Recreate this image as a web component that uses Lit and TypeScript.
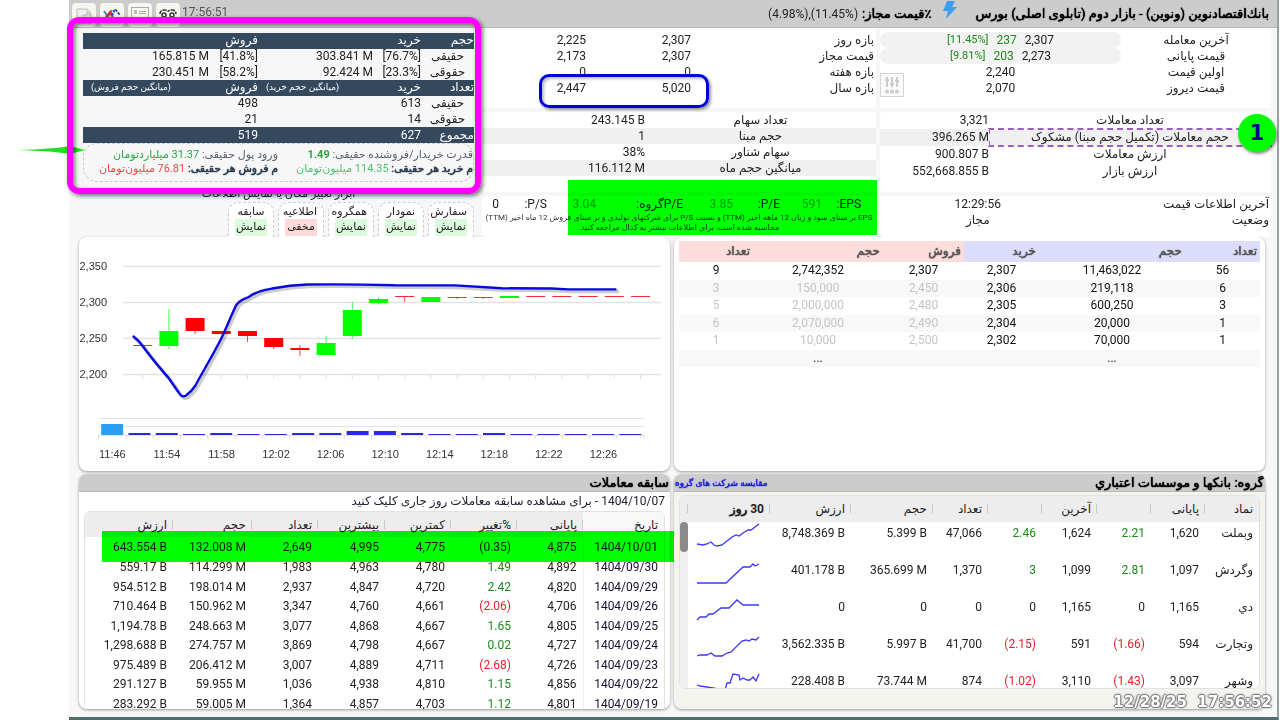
import { LitElement, html, svg, css } from "lit";
import { customElement } from "lit/decorators.js";

type Candle = [number, number, boolean, number?, number?];

// top, bottom, rising, wick top, wick bottom
const CANDLES: Candle[] = [
  [345, 346, false],
  [331, 346, true, 309, 349],
  [318, 331, false, 318, 334],
  [331, 334, false],
  [331, 336, false, 331, 342],
  [338, 347, false, 338, 349],
  [348, 350, false, 345, 356],
  [343, 355, true, 336, 355],
  [310, 336, true, 302, 339],
  [299, 303, true, 297, 304],
  [296, 297, false, 296, 302],
  [297, 302, true],
  [297, 298, false, 297, 299],
  [297, 298, false, 297, 299],
  [296, 298, true],
  [296, 297, false],
  [296, 297, false],
  [296, 297, false],
  [296, 297, false],
  [296, 297, false],
];
const VOLUMES = [11, 2, 2, 1, 2, 1, 1, 2, 2, 4, 4, 2, 1, 1, 2, 1, 1, 1, 1, 1];
const TIMES = ["11:46", "11:54", "11:58", "12:02", "12:06", "12:10", "12:14", "12:18", "12:22", "12:26"];
const PRICES: [string, number][] = [["2,350", 266], ["2,300", 302], ["2,250", 338], ["2,200", 374]];

const BOOK = [
  ["56", "11,463,022", "2,307", "2,307", "2,742,352", "9"],
  ["6", "219,118", "2,306", "2,450", "150,000", "3"],
  ["3", "600,250", "2,305", "2,480", "2,000,000", "5"],
  ["1", "20,000", "2,304", "2,490", "2,070,000", "6"],
  ["1", "70,000", "2,302", "2,500", "10,000", "1"],
];

const HISTORY = [
  ["1404/10/01", "4,875", "(0.35)", "4,775", "4,995", "2,649", "132.008 M", "643.554 B"],
  ["1404/09/30", "4,892", "1.49", "4,780", "4,963", "1,983", "114.299 M", "559.17 B"],
  ["1404/09/29", "4,820", "2.42", "4,720", "4,847", "2,937", "198.014 M", "954.512 B"],
  ["1404/09/26", "4,706", "(2.06)", "4,661", "4,760", "3,347", "150.962 M", "710.464 B"],
  ["1404/09/25", "4,805", "1.65", "4,667", "4,868", "3,077", "248.663 M", "1,194.78 B"],
  ["1404/09/24", "4,727", "0.02", "4,667", "4,798", "3,869", "274.757 M", "1,298.688 B"],
  ["1404/09/23", "4,726", "(2.68)", "4,711", "4,889", "3,007", "206.412 M", "975.489 B"],
  ["1404/09/22", "4,856", "1.15", "4,810", "4,938", "1,036", "59.955 M", "291.127 B"],
  ["1404/09/19", "4,801", "1.12", "4,703", "4,857", "1,364", "59.005 M", "283.292 B"],
];

const GROUP = [
  { row: ["وبملت", "1,620", "2.21", "1,624", "2.46", "47,066", "5.399 B", "8,748.369 B"],
    line: "1,22 7,23 11,22 15,20 18,23 21,24 26,23 31,19 36,15 40,13 43,14 47,11 52,8 55,8 59,5 63,2" },
  { row: ["وگردش", "1,097", "2.81", "1,099", "3", "1,370", "365.699 M", "401.178 B"],
    line: "1,24 30,24 47,8 54,8 57,5 59,7 63,5" },
  { row: ["دي", "1,165", "0", "1,165", "0", "0", "0", "0"],
    line: "1,24 4,21 10,21 13,18 17,18 25,12 33,12 41,4 47,9 63,9" },
  { row: ["وتجارت", "594", "(1.66)", "591", "(2.15)", "41,700", "5.997 B", "3,562.335 B"],
    line: "1,23 4,22 11,22 15,20 19,23 26,23 31,20 35,19 46,8 50,7 53,8 56,6 60,7 63,4" },
  { row: ["وشهر", "3,097", "(1.43)", "3,110", "(1.02)", "874", "73.744 M", "228.408 B"],
    line: "1,15 4,16 17,18 29,20 31,13 34,13 37,4 43,5 44,10 47,8 51,10 54,10 57,7 60,11 63,4" },
];

const TOOLS: [string, boolean][] = [["سفارش", true], ["نمودار", true], ["همگروه", true], ["اطلاعیه", false], ["سابقه", true]];

const tone = (v: string) => (v.startsWith("(") ? "n neg" : v === "0" ? "n" : "n pos");

@customElement("app-root")
export class AppRoot extends LitElement {
  static styles = css`
    :host {
      display: block; height: 100vh; min-height: 600px; overflow: hidden; background: #fff; color: #222;
      font: 12px/16px Roboto, "DejaVu Sans", sans-serif; position: relative; box-sizing: border-box;
    }
    * { box-sizing: border-box; }
    button { font: inherit; color: inherit; margin: 0; cursor: pointer; }
    table { border-collapse: collapse; border-spacing: 0; table-layout: fixed; width: 100%; }
    th, td { padding: 0; font-weight: 400; text-align: right; white-space: nowrap; }
    .n { direction: ltr; unicode-bidi: isolate; }
    .pos { color: #1a8a1a; }
    .neg { color: #e8202a; }
    .strong { font-weight: 400; text-shadow: 0 0 1px currentColor, 0 0 1px currentColor; }
    .frame {
      direction: rtl; height: 100%; margin: 0 1px 0 69px; display: flex; flex-direction: column;
      background: #f7f7f7; border-right: 2px solid #98a0a3; border-bottom: 3px solid #4f6c6e;
    }
    .bar {
      display: flex; align-items: center; height: 28px; flex: none; padding: 0 8px 0 3px;
      background: #ccc; border-bottom: 1px solid #bbb; font-size: 13px;
    }
    .bar h1 { margin: 0; font-size: 13px; color: #000; }
    .bar .bolt { margin: 0 18px 8px 12px; width: 14px; height: 18px; }
    .bar .lim { color: #000; }
    .bar .pcts { margin-right: 4px; font-size: 12px; }
    .clock { margin: 0 auto 4px 0; color: #555; font-size: 12px; padding-left: 2px; }
    .icons { display: flex; gap: 4px; direction: ltr; align-self: flex-end; }
    .icons button {
      width: 24px; height: 24px; padding: 0; border: 0; border-radius: 4px; background: #f6f5ee; display: block;
    }
    .icons svg { display: block; }
    .top { display: grid; grid-template-columns: 391fr 394fr 395fr; gap: 4px; padding: 1px 6px 0 14px; height: 209px; flex: none; }
    .col { display: flex; flex-direction: column; gap: 4px; position: relative; min-width: 0; }
    .card { background: #fff; border-radius: 4px; }
    .c1 { min-height: 79px; padding-top: 3px; position: relative; }
    .c2 { min-height: 80px; }
    .c3 { flex: 1; }
    .kv { display: grid; align-content: start; }
    .kv.quote { grid-template-columns: 150px 1fr; text-align: center; }
    .pill { display: flex; justify-content: center; gap: 8px; border-radius: 8px; }
    .pill .n { font-size: 11px; }
    .pill.on { background: #f2f2f2; }
    .slider {
      position: absolute; left: 0; top: 44px; width: 24px; height: 24px; padding: 0;
      border: 1px solid #d4d4d4; background: #fafafa;
    }
    .slider svg { display: block; margin: auto; }
    .kv.deal { grid-template-columns: 282px 1fr; line-height: 17px; text-align: center; }
    .kv.deal .n { text-align: right; }
    .suspect { outline: 2px dashed #9b5fc0; outline-offset: -1px; }
    .alt { background: #f0f0f0; }
    .kv.half { grid-template-columns: 1fr 1fr; }
    .kv.half > :nth-child(odd) { padding-right: 2px; }
    .kv.half > :nth-child(even) { text-align: center; }
    .kv.range { grid-template-columns: 185px 105px 1fr; }
    .kv.range > :nth-child(3n + 1) { padding-right: 2px; }
    .kv.range .n { text-align: right; }
    .kv.share { grid-template-columns: 231px 1fr; text-align: center; }
    .kv.share .n { text-align: right; }
    .eps { display: grid; grid-template-columns: 39px 42px 47px 50px 87px 49px 48px 1fr; padding-right: 15px; }
    .eps .pos { color: #4a9a4a; }
    .fine { margin: 1px 0 0; color: #333; font-size: 8px; line-height: 10px; text-align: center; }
    .left { padding: 4px 4px 0 0; gap: 0; }
    .clients { height: 110px; line-height: 15px; }
    .clients .head { background: #34495e; color: #fff; }
    .clients .n { text-align: right; }
    .clients .who { text-align: center; }
    .clients .avg { text-align: left; font-size: 9px; padding-left: 8px; }
    .power {
      display: grid; grid-template-columns: 195px 1fr; line-height: 14px; border: 1px dashed #ccc;
      border-radius: 14px; padding: 4px 0 6px; color: #555f6e; height: 39px; font-size: 11px; white-space: nowrap;
    }
    .power b { color: #2c3e50; }
    .power .gain, .power .gain b { color: #28a745; }
    .power .up { color: #4cc274; }
    .power .loss { color: #f04848; }
    .caption { text-align: center; font-size: 11px; line-height: 14px; margin: 5px 0 0; }
    .tools { display: flex; gap: 4px; padding-top: 0; margin-top: auto; }
    .tools button {
      width: 46px; height: 35px; padding: 1px 6px 0; background: #fff; border: 1px dashed #ccc; border-bottom: 0;
      border-radius: 10px 10px 0 0; line-height: 14px; font-size: 11px; display: block; white-space: nowrap;
    }
    .tools span { display: block; }
    .tools .state { background: #dcfbdc; height: 17px; line-height: 15px; }
    .tools .off { background: #fdd9d9; }
    .grid { display: grid; grid-template-columns: 1fr 1fr; gap: 4px; padding: 0 12px 0 10px; }
    .mid { height: 234px; flex: none; }
    .low { flex: 1; min-height: 0; padding-top: 3px; padding-bottom: 8px; }
    .wrap { position: relative; min-width: 0; min-height: 0; }
    .panel { background: #fff; border-radius: 8px; box-shadow: 0 1px 3px #999; overflow: hidden; height: 100%; }
    .chart { display: block; width: 100%; height: 100%; direction: ltr; }
    .chart text { font: 11px "Liberation Sans", sans-serif; fill: #333; }
    .book { margin: 4px 5px; width: calc(100% - 10px); height: 126px; line-height: 17px; color: #111; }
    .book th { height: 21px; padding-right: 3px; color: #555; }
    .book td { text-align: center; }
    .book .buy { background: #dcdcfc; }
    .book .sell { background: #fddcdc; }
    .book tbody tr:nth-child(even) { background: #f8f8f8; }
    .book .dim { color: #c4c4c4; }
    .ttl {
      height: 18px; background: #ccc; display: flex; justify-content: space-between; align-items: center;
      color: #000; padding: 0 1px; border-bottom: 1px solid #bbb;
    }
    .ttl h2 { margin: 0; font-size: 13px; }
    .ttl a { color: #2020e0; font-size: 9px; text-decoration: none; }
    .note { margin: 0; padding: 1px 5px 0 0; line-height: 17px; color: #223; height: 19px; white-space: nowrap; }
    .box { margin: 0 5px; border: 1px solid #e2e2e2; border-radius: 6px; overflow: hidden; background: #fff; }
    .hist th, .group th { height: 26px; background: #ededed; position: relative; padding-right: 6px; }
    .hist th { height: 25px; }
    .hist th + th::before, .group th + th::before {
      content: ""; position: absolute; right: 0; top: 8px; height: 9px; border-right: 1px solid #c8c8c8;
    }
    .hist td, .group td { padding-right: 6px; }
    .hist td.n, .group td.n { padding-right: 6px; text-align: right; }
    .hist th:first-child { background: #f8f8f8; }
    .hist td:first-child { border-left: 1px solid #eee; color: #113; }
    .hist tr { height: 19px; }
    .hist tbody tr:nth-child(even) { height: 20px; }
    .hist tbody tr:first-child { height: 20px; }
    .gpanel { background: #f4f4ef; display: flex; flex-direction: column; }
    .gbox { margin: 3px 5px 20px; flex: 1; min-height: 0; position: relative; }
    .group td { height: 37px; vertical-align: top; line-height: 22px; }
    .group svg { display: block; margin-right: 4px; }
    .track { position: absolute; left: 0; top: 26px; bottom: 0; width: 8px; background: #f0f0f0; }
    .thumb { height: 30px; border-radius: 4px; background: #8a8a8a; }
    .hl { position: absolute; background: #0f0; mix-blend-mode: multiply; pointer-events: none; }
    .hl.ratio { left: 86px; right: -1px; top: 151px; height: 55px; }
    .hl.day { left: 23px; right: -4px; top: 57px; height: 31px; }
    .mark-clients {
      position: absolute; left: -16px; right: -3px; top: -12px; height: 177px; pointer-events: none;
      border: 6px solid #f0f; border-radius: 12px; box-shadow: 2px 2px 4px #0008, inset 2px 2px 4px #0008;
    }
    .mark-year {
      position: absolute; left: 57px; right: 167px; top: 45px; height: 34px; pointer-events: none;
      border: 3px solid #0000dc; border-radius: 10px; box-shadow: 2px 2px 3px #0006, inset 2px 2px 3px #0004;
    }
    .dot {
      position: absolute; right: -5px; top: 85px; width: 38px; height: 38px; border-radius: 50%;
      background: #0f0; color: #000090; font: 700 21px/38px "DejaVu Sans", sans-serif; text-align: center;
      box-shadow: 1px 2px 3px #0007;
    }
    .arrow { position: absolute; left: -66px; top: 115px; width: 68px; height: 12px; }
    .stamp {
      position: absolute; right: 8px; bottom: 8px; font: 700 15px/20px "DejaVu Sans", sans-serif; color: #fff; white-space: pre;
      text-shadow: 1px 0 1px #777, -1px 0 1px #777, 0 1px 1px #777, 0 -1px 1px #777, 0 0 3px #888;
    }
  `;

  private chart() {
    return html`<svg class="chart" viewBox="79 237 591 234" role="img" aria-label="نمودار">
      ${PRICES.map(([t, y]) => svg`
        <path d="M123 ${y + 0.5}H661" stroke="#e2e2e2" stroke-width="1.4" />
        <text x="107" y=${y + 4} text-anchor="end">${t}</text>`)}
      ${CANDLES.map(([a, b, up, w1, w2], i) => {
        const x = 142.7 + i * 26.2;
        const c = up ? "#00ff00" : "#ff0000";
        const thin = b - a === 1;
        return svg`
          <path d="M${x} 375V379" stroke="#ddd" />
          ${w1 ? svg`<path d="M${x} ${w1}V${w2}" stroke=${c} opacity=".75" />` : ""}
          <rect x=${x - 9.5} y=${a} width="19" height=${b - a} fill=${thin ? "#e83030" : c} />`;
      })}
      <path d="M99 418.5H644M99 426.5H644M99 435.5H644" stroke="#e4e4e4" />
      ${VOLUMES.map((h, i) => svg`
        <path d="M${98.8 + i * 27.27} 435V439" stroke="#ddd" />
        <rect x=${101.2 + i * 27.27} y=${435 - h} width="22" height=${h} fill=${i ? "#2c28e0" : "#2a9df4"} />`)}
      <path d="M644 435V439" stroke="#ddd" />
      ${TIMES.map((t, i) => svg`<text x=${112.4 + i * 54.56} y="458" text-anchor="middle">${t}</text>`)}
      <g fill="none" stroke-linecap="round" stroke-linejoin="round">
        ${[["#0003", 2, 3.5], ["#0a08e0", 0, 2.4]].map(([c, o, w]) => svg`
          <path transform="translate(${o} ${o})" stroke=${c} stroke-width=${w}
            d="M133.5 336.5Q138 340 142.7 346C152 359 160 368 168.8 378.3L179 393Q182 398 186 395.5Q191 392 195.3 385.7C206 366 214 353 221 339C228 324 231 316 236 305.5C240 299 245 299 249 296.7C258 291 264 290 272.3 288.5Q290 285 307.3 284.5Q350 284 395 285.2L455 285.4Q480 287 502 288.3L552 288.5L568 289.4H615.5" />`)}
      </g>
    </svg>`;
  }

  private header() {
    return html`<header class="bar">
      <h1 class="strong">بانك‌اقتصادنوین (ونوین) - بازار دوم (تابلوی اصلی) بورس</h1>
      <svg class="bolt" viewBox="0 0 14 18"><path d="M4 0H12L9 6H14L3 18L5 10H0Z" fill="#3d9df2" /></svg>
      <span class="lim strong">٪قیمت مجاز:</span>
      <span class="n pcts">(4.98%),(11.45%)</span>
      <span class="clock">17:56:51</span>
      <div class="icons">
        <button aria-label="یادداشت"><svg width="24" height="24" viewBox="0 0 24 24" fill="none" stroke="#bbb"><path d="M5 6H15L19 10V20H5Z" fill="#eee" /><path d="M15 6V10H19" /><path d="M11 12H15V9L20 14L15 18V16H11Z" fill="#ddd" /></svg></button>
        <button aria-label="نمودار"><svg width="24" height="24" viewBox="0 0 24 24" fill="none" stroke-width="2"><path d="M4 8L8 14L12 7" stroke="#3a8fc0" /><path d="M6 14L10 9L13 15" stroke="#d22" /><path d="M12 13L15 6L20 12" stroke="#35b" stroke-dasharray="3 1" /></svg></button>
        <button aria-label="اطلاعات"><svg width="24" height="24" viewBox="0 0 24 24" fill="none" stroke="#aaa"><rect x="3.500" y="4.500" width="17" height="14" /><path d="M11 8.500H18M11 10.500H18M6 14.500H18" /><rect x="6" y="7" width="3" height="4" fill="#bbb" stroke="none" /></svg></button>
        <button aria-label="گروه"><svg width="24" height="24" viewBox="0 0 24 24" fill="none" stroke="#333" stroke-width="1.500"><path d="M4 11Q4 7 8 7Q12 7 12 9Q12 7 16 7Q20 7 20 11" stroke-dasharray="4 1" /><circle cx="8" cy="12" r="2" /><circle cx="16" cy="12" r="2" /><path d="M10 15H14" /></svg></button>
      </div>
    </header>`;
  }

  private top() {
    const N = (v: string) => html`<span class="n">${v}</span>`;
    return html`<section class="top">
      <div class="col">
        <div class="card c1">
          <div class="kv quote">
            <span>آخرین معامله</span>
            <span class="pill on"><span>2,307</span><span class="pos">237</span><span class="n pos">[11.45%]</span></span>
            <span>قیمت پایانی</span>
            <span class="pill on"><span>2,273</span><span class="pos">203</span><span class="n pos">[9.81%]</span></span>
            <span>اولین قیمت</span><span class="pill">2,240</span>
            <span>قیمت دیروز</span><span class="pill">2,070</span>
          </div>
          <button class="slider" aria-label="تنظیمات"><svg width="16" height="20" viewBox="0 0 16 20" stroke="#ccc" stroke-width="2" fill="#ccc"><path d="M3 2V12M8 2V12M13 2V12" /><path d="M1 5H5M6 9H10M11 6H15" /><circle cx="3" cy="16.500" r="1" /><circle cx="8" cy="16.500" r="1" /><circle cx="13" cy="16.500" r="1" /></svg></button>
        </div>
        <div class="card c2 kv deal">
          <span>تعداد معاملات</span>${N("3,321")}
          <span class="alt suspect">حجم معاملات (تکمیل حجم مبنا) مشکوک</span><span class="n alt">396.265 M</span>
          <span>ارزش معاملات</span>${N("900.807 B")}
          <span>ارزش بازار</span>${N("552,668.855 B")}
        </div>
        <div class="card c3 kv half">
          <span>آخرین اطلاعات قیمت</span><span>12:29:56</span>
          <span>وضعیت</span><span>مجاز</span>
        </div>
        <span class="dot">1</span>
      </div>
      <div class="col">
        <div class="card c1">
          <div class="kv range">
            <span>بازه روز</span>${N("2,307")}${N("2,225")}
            <span>قیمت مجاز</span>${N("2,307")}${N("2,173")}
            <span>بازه هفته</span>${N("0")}${N("0")}
            <span>بازه سال</span>${N("5,020")}${N("2,447")}
          </div>
          <div class="mark-year"></div>
        </div>
        <div class="card c2">
          <div class="kv share">
            <span>تعداد سهام</span>${N("243.145 B")}
            <span class="alt">حجم مبنا</span><span class="n alt">1</span>
            <span>سهام شناور</span>${N("38%")}
            <span class="alt">میانگین حجم ماه</span><span class="n alt">116.112 M</span>
          </div>
        </div>
        <div class="card c3">
          <div class="eps">
            <span>EPS:</span><span class="pos">591</span><span>P/E:</span><span class="pos">3.85</span>
            <span>P/Eگروه:</span><span class="pos">3.04</span><span>P/S:</span><span>0</span>
          </div>
          <p class="fine">EPS بر مبنای سود و زیان 12 ماهه اخیر (TTM) و نسبت P/S برای شرکتهای تولیدی و بر مبنای فروش 12 ماه اخیر (TTM)<br />محاسبه شده است. برای اطلاعات بیشتر به کدال مراجعه کنید.</p>
        </div>
        <div class="hl ratio"></div>
      </div>
      <div class="col left">
        <table class="clients">
          <colgroup><col width="53" /><col width="48" /><col width="115" /><col width="49" /><col /></colgroup>
          <tr class="head"><th>حجم</th><th>خرید</th><th></th><th>فروش</th><th></th></tr>
          <tr><th class="who">حقیقی</th><td class="n">[76.7%]</td><td class="n">303.841 M</td><td class="n">[41.8%]</td><td class="n">165.815 M</td></tr>
          <tr><th class="who">حقوقی</th><td class="n">[23.3%]</td><td class="n">92.424 M</td><td class="n">[58.2%]</td><td class="n">230.451 M</td></tr>
          <tr class="head"><th>تعداد</th><th>خرید</th><th class="avg">(میانگین حجم خرید)</th><th>فروش</th><th class="avg">(میانگین حجم فروش)</th></tr>
          <tr><th class="who">حقیقی</th><td>613</td><td></td><td>498</td><td></td></tr>
          <tr><th class="who">حقوقی</th><td>14</td><td></td><td>21</td><td></td></tr>
          <tr class="head"><th>مجموع</th><td>627</td><td></td><td>519</td><td></td></tr>
        </table>
        <div class="power">
          <span>قدرت خریدار/فروشنده حقیقی: <span class="gain"><b>1.49</b></span></span>
          <span>ورود پول حقیقی: <span class="gain">31.37 میلیاردتومان</span></span>
          <span><b class="strong">م خرید هر حقیقی:</b> <span class="up">114.35 میلیون‌تومان</span></span>
          <span><b class="strong">م فروش هر حقیقی:</b> <span class="loss">76.81 میلیون‌تومان</span></span>
        </div>
        <p class="caption">ابزار تغییر مکان یا نمایش اطلاعات</p>
        <div class="tools">
          ${TOOLS.map(([t, on]) => html`<button><span>${t}</span><span class="state ${on ? "" : "off"}">${on ? "نمایش" : "مخفی"}</span></button>`)}
        </div>
        <svg class="arrow" viewBox="0 0 68 12"><path d="M0 6Q36 5 53 2L68 6L53 10Q36 7 0 6Z" fill="#1ee01e" /></svg>
        <div class="mark-clients"></div>
      </div>
    </section>`;
  }

  render() {
    return html`<main class="frame">
      ${this.header()} ${this.top()}
      <section class="grid mid">
        <div class="panel">
          <table class="book">
            <colgroup><col width="75" /><col /><col width="75" /><col width="81" /><col width="130" /><col width="74" /></colgroup>
            <thead><tr>
              <th class="buy strong">تعداد</th><th class="buy strong">حجم</th><th class="buy strong">خرید</th>
              <th class="sell strong">فروش</th><th class="sell strong">حجم</th><th class="sell strong">تعداد</th>
            </tr></thead>
            <tbody>
              ${BOOK.map((r, k) => html`<tr>${r.map((v, i) => html`<td class=${k && i > 2 ? "dim" : ""}>${v}</td>`)}</tr>`)}
              <tr><td></td><td>...</td><td></td><td></td><td>...</td><td></td></tr>
            </tbody>
          </table>
        </div>
        <div class="panel">${this.chart()}</div>
      </section>
      <section class="grid low">
        <div class="wrap"><div class="panel gpanel">
          <div class="ttl"><h2 class="strong">گروه: بانکها و موسسات اعتباري</h2><a class="strong" href="#group">مقایسه شرکت های گروه</a></div>
          <div class="box gbox">
            <table class="group">
              <colgroup><col width="54" /><col width="54" /><col width="54" /><col width="55" /><col width="54" /><col width="55" /><col width="82" /><col width="81" /><col width="82" /><col /></colgroup>
              <thead><tr>${["نماد", "پایانی", "", "آخرین", "", "تعداد", "حجم", "ارزش"].map((t) => html`<th>${t}</th>`)}<th><b>30</b> <span class="strong">روز</span></th><th></th></tr></thead>
              <tbody>${GROUP.map((g) => html`<tr>
                ${g.row.map((v, i) => html`<td class=${i === 0 ? "" : i === 2 || i === 4 ? tone(v) : "n"}>${v}</td>`)}
                <td><svg width="64" height="30" viewBox="0 0 64 30"><polyline points=${g.line} fill="none" stroke="#3a38f0" stroke-width="1.300" /></svg></td><td></td>
              </tr>`)}</tbody>
            </table>
            <div class="track"><div class="thumb"></div></div>
          </div>
        </div></div>
        <div class="wrap">
          <div class="panel">
            <div class="ttl"><h2 class="strong">سابقه معاملات</h2></div>
            <p class="note">1404/10/07 - برای مشاهده سابقه معاملات روز جاری کلیک کنید</p>
            <div class="box">
              <table class="hist">
                <colgroup><col width="81" /><col width="66" /><col width="66" /><col width="66" /><col width="67" /><col width="66" /><col width="79" /><col /></colgroup>
                <thead><tr>${["تاریخ", "پایانی", "%تغییر", "کمترین", "بیشترین", "تعداد", "حجم", "ارزش"].map((t) => html`<th>${t}</th>`)}</tr></thead>
                <tbody>${HISTORY.map((r) => html`<tr>${r.map((v, i) => html`<td class=${i === 2 ? tone(v) : "n"}>${v}</td>`)}</tr>`)}</tbody>
              </table>
            </div>
          </div>
          <div class="hl day"></div>
        </div>
      </section>
    </main>
    <div class="stamp">12/28/25  17:56:52</div>`;
  }
}
